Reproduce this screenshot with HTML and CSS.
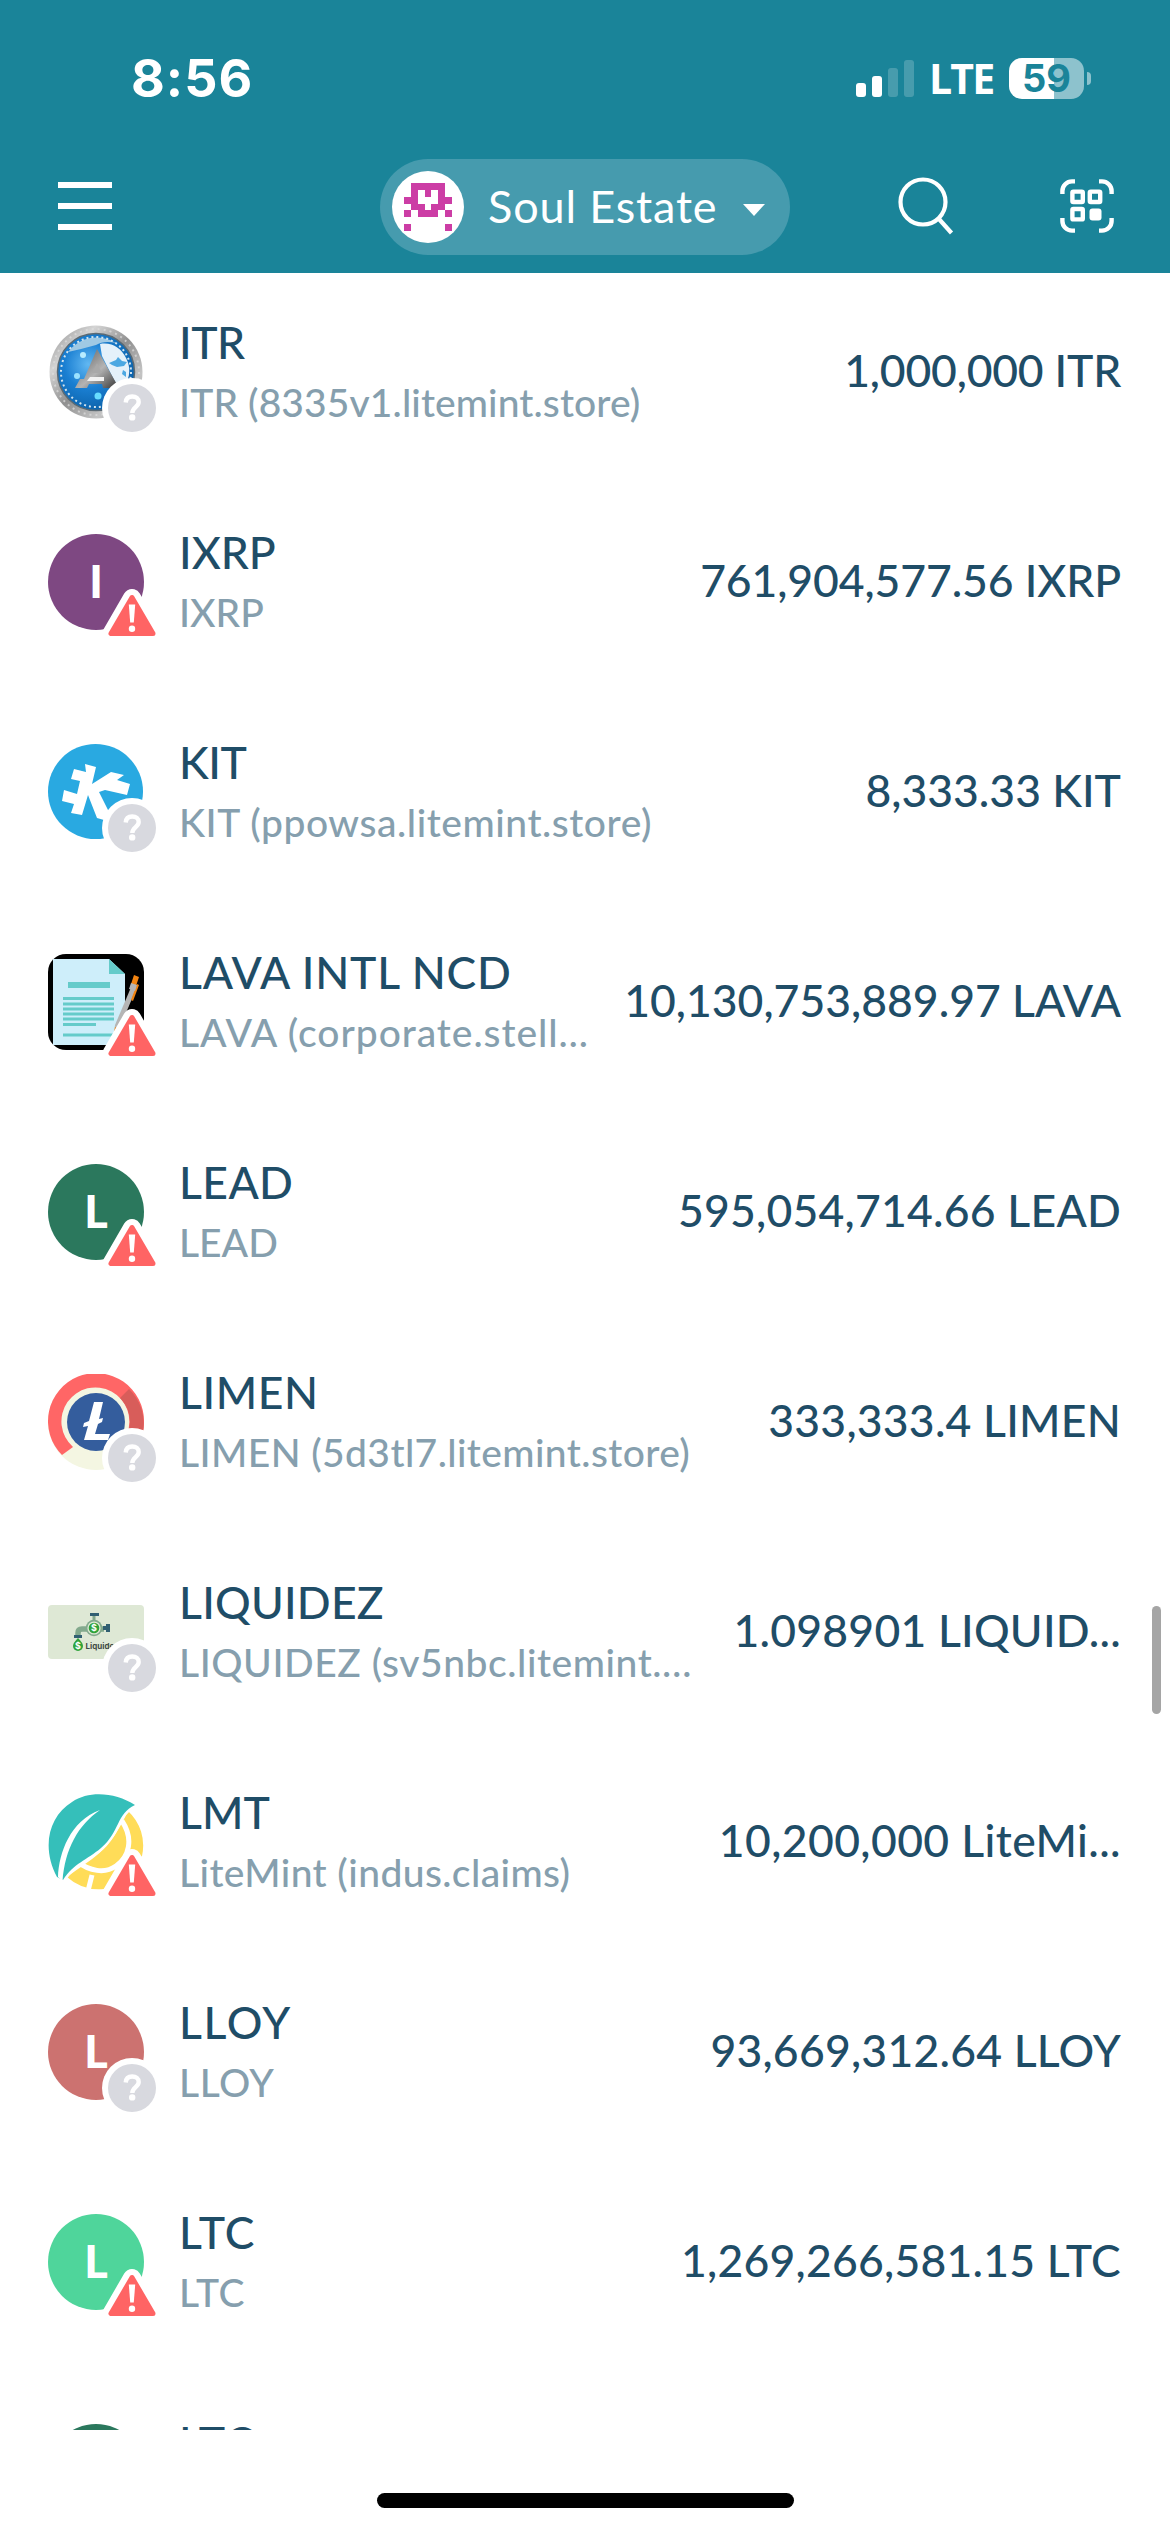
FILE: index.html
```html
<!DOCTYPE html>
<html lang="en">
<head>
<meta charset="utf-8">
<title>Assets</title>
<link rel="stylesheet" href="styles.css">
</head>
<body>
<svg class="defs" width="0" height="0" aria-hidden="true">
  <symbol id="unknown" viewBox="0 0 60 60">
    <circle cx="30" cy="30" r="30" fill="#fff"/>
    <circle cx="30" cy="30" r="24" fill="#d8d9df"/>
    <path d="M23.700 24.500c.3-4 3-6 6.500-6 3.900 0 6.500 2.200 6.500 5.500 0 5-6.400 5.400-6.400 11" fill="none" stroke="#fff" stroke-width="4.400"/>
    <circle cx="30.200" cy="39.400" r="3.200" fill="#fff"/>
  </symbol>
  <symbol id="warning" viewBox="0 0 60 60">
    <path d="M30 10 9.500 45.500h41z" fill="#fff" stroke="#fff" stroke-width="18" stroke-linejoin="round"/>
    <path d="M30 9.500 9 45.500h42z" fill="#ff6464" stroke="#ff6464" stroke-width="5" stroke-linejoin="round"/>
    <path d="M26.800 16.500h6.400l-1.400 18h-3.600z" fill="#fff"/>
    <circle cx="30" cy="40.800" r="3.200" fill="#fff"/>
  </symbol>
</svg>
<div class="screen">
  <header class="header">
    <div class="status">
      <span class="time">8:56</span>
      <div class="status-right">
        <svg class="signal" width="58" height="37" viewBox="0 0 58 37" fill="#fff">
          <rect y="23" width="10" height="14" rx="3"/><rect x="16" y="16" width="10" height="21" rx="3"/>
          <rect x="32" y="8" width="10" height="29" rx="3" opacity=".2"/><rect x="48" width="10" height="37" rx="3" opacity=".2"/>
        </svg>
        <span class="network">LTE</span>
        <div class="battery"><span class="level">59</span></div>
        <span class="nub"></span>
      </div>
    </div>
    <nav class="nav">
      <svg class="menu" width="54" height="48" viewBox="0 0 54 48" fill="#fff"><path d="M0 0h54v6H0zM0 21h54v6H0zM0 42h54v6H0z"/></svg>
      <div class="account">
        <svg class="identicon" width="72" height="72" viewBox="0 0 72 72">
          <circle cx="36" cy="36" r="36" fill="#fff"/>
          <path fill="#cc3da5" d="M19 12h34v14h7v7h-7v6h-7v7H26v-7h-7v-6h-7v-7h7zM12 39h7v7h-7zM53 39h7v7h-7zM12 53h7v7h-7zM53 53h7v7h-7z"/>
          <path fill="#fff" d="M26 19h7v7h6v-7h7v14h-7v6h-6v-6h-7z"/>
        </svg>
        <span class="account-name">Soul Estate</span>
        <svg class="caret" width="22" height="12" viewBox="0 0 22 12"><path d="M0 0h22L11 12z" fill="#fff"/></svg>
      </div>
      <svg class="search" width="56" height="62" viewBox="0 0 56 62" fill="none" stroke="#fff" stroke-width="4.200"><circle cx="25" cy="26" r="22.500"/><path d="m40.500 42.500 13 14.500"/></svg>
      <svg class="scan" width="54" height="54" viewBox="0 0 54 54" fill="none" stroke="#fff" stroke-width="4.400">
        <path d="M2.400 15v-3a9.600 9.600 0 0 1 9.600-9.600h3M39 2.400h3a9.600 9.600 0 0 1 9.600 9.600v3M51.600 39v3a9.600 9.600 0 0 1-9.600 9.600h-3M15 51.600h-3A9.600 9.600 0 0 1 2.400 42v-3"/>
        <rect x="12.400" y="12.600" width="10.400" height="10.400" rx="1"/><rect x="29.800" y="12.600" width="10.400" height="10.400" rx="1"/><rect x="12.400" y="30" width="10.400" height="10.400" rx="1"/>
        <rect x="29.500" y="29.500" width="12" height="12" rx="3" fill="#fff" stroke="none"/>
      </svg>
    </nav>
  </header>

  <main class="list">
    <div class="row">
      <div class="avatar">
        <svg viewBox="0 0 96 96">
          <defs>
            <linearGradient id="rim" x1="0" y1="0" x2="1" y2="1"><stop offset="0" stop-color="#8a8a8a"/><stop offset=".25" stop-color="#d4d4d4"/><stop offset=".5" stop-color="#909090"/><stop offset=".75" stop-color="#c4c4c4"/><stop offset="1" stop-color="#999"/></linearGradient>
            <radialGradient id="globe" cx=".4" cy=".4" r=".62"><stop offset="0" stop-color="#62b8f2"/><stop offset=".5" stop-color="#1a7fd2"/><stop offset="1" stop-color="#0c62aa"/></radialGradient>
            <linearGradient id="steel" x1="0" y1="0" x2="1" y2="1"><stop offset="0" stop-color="#555"/><stop offset=".55" stop-color="#b4b4b4"/><stop offset="1" stop-color="#333"/></linearGradient>
          </defs>
          <circle cx="48" cy="48" r="46.500" fill="url(#rim)"/>
          <circle cx="48" cy="48" r="43" fill="none" stroke="#dedede" stroke-width="2" stroke-dasharray="2 4" opacity=".7"/>
          <circle cx="48" cy="48" r="38.500" fill="url(#globe)" stroke="#5b6a74" stroke-width="1.500"/>
          <path d="M20 28A36 36 0 0 1 68 19q-12-3-20 2-14 4-28 7z" fill="#9fc9e4"/>
          <circle cx="48" cy="48" r="35" fill="none" stroke="#d3e4ee" stroke-width="2" stroke-dasharray="2 3"/>
          <path d="M52 20c12-2 21 4 26 14 5 9 4 20-1 26l-8 2-15-30z" fill="#e4f1fa"/>
          <path d="m61 39 7-3 2-3 4 4 5 1-3 4-7 1-5-2zM75 46l3 2v5l-4-3z" fill="#4ba8e2"/>
          <path d="M49 25 71 64H55l-1-4H41l-2 4H27l5-9h4z" fill="url(#steel)"/>
          <path d="M42 53h14v4H39z" fill="#f2f2f2"/><path d="m49 39-5 10h10z" fill="#a9a9a9"/>
          <circle cx="35" cy="31" r="3" fill="#b8ecff"/><circle cx="29" cy="52" r="3" fill="#9be2ff"/><circle cx="50" cy="72" r="3.500" fill="#67dcff"/>
        </svg>
        <svg class="badge"><use href="#unknown"/></svg>
      </div>
      <div class="info"><div class="name snug">ITR</div><div class="issuer wide-1">ITR (8335v1.litemint.store)</div></div>
      <div class="amount tight-2">1,000,000 ITR</div>
    </div>

    <div class="row">
      <div class="avatar"><span class="letter purple">I</span><svg class="badge"><use href="#warning"/></svg></div>
      <div class="info"><div class="name">IXRP</div><div class="issuer">IXRP</div></div>
      <div class="amount tight-1">761,904,577.56 IXRP</div>
    </div>

    <div class="row">
      <div class="avatar">
        <svg viewBox="0 0 96 96"><circle cx="47.500" cy="47.500" r="47.500" fill="#29a9e1"/>
          <path fill="#fff" d="m37 20 11 3-4 17 19-12 13 3-7 5 13 4-3 11-22-5-6 2 12 24-7 4-7-2-9-23-6 20-11-2 3-9-12-3 2-11 13 4 3-13-9-2 3-10 12 3z"/></svg>
        <svg class="badge"><use href="#unknown"/></svg>
      </div>
      <div class="info"><div class="name snug">KIT</div><div class="issuer wide-5">KIT (ppowsa.litemint.store)</div></div>
      <div class="amount">8,333.33 KIT</div>
    </div>

    <div class="row">
      <div class="avatar">
        <svg viewBox="0 0 96 96"><rect width="96" height="96" rx="18" fill="#000"/>
          <path d="M5 5h56l16 15v71H5z" fill="#ceeefa"/><path d="M61 5v15h16z" fill="#65cbca"/>
          <path fill="#65cbca" d="M20 28h42v6H20zM15 43h51v3H15zM15 48.500h51v3H15zM15 53.500h51v3H15zM15 58.500h51v3H15zM15 63.500h51v3H15zM15 69h33v3H15zM15 79.500h51v3H15z"/>
          <path d="m84 31 5 2-17 40-6 7 1-9z" fill="#b5b5b5"/><path d="m86 21 5 2-3 9-5-2zM89 30l2 1-6 16-2-1z" fill="#f28411"/><path d="m83 29 6 2-2 6-6-2z" fill="#b5b5b5"/><path d="m67 73 3 2-4 4z" fill="#f28411"/></svg>
        <svg class="badge"><use href="#warning"/></svg>
      </div>
      <div class="info"><div class="name wide-8">LAVA INTL NCD</div><div class="issuer wide-9">LAVA (corporate.stell…</div></div>
      <div class="amount">10,130,753,889.97 LAVA</div>
    </div>

    <div class="row">
      <div class="avatar"><span class="letter forest">L</span><svg class="badge"><use href="#warning"/></svg></div>
      <div class="info"><div class="name wide-4">LEAD</div><div class="issuer">LEAD</div></div>
      <div class="amount wide-2">595,054,714.66 LEAD</div>
    </div>

    <div class="row">
      <div class="avatar">
        <svg viewBox="0 0 96 96"><circle cx="48" cy="48" r="48" fill="#f4f6e2"/>
          <path d="M14 81A48 48 0 1 1 96 48a48 48 0 0 1-1 10L79 60A34 34 0 1 0 25 73z" fill="#ff6666"/>
          <path d="M81 15a48 48 0 0 1 14 43l-14-2a34 34 0 0 0-9-32z" fill="#d85d5a"/>
          <circle cx="48" cy="48" r="29" fill="#345d9d"/>
          <path fill="#fff" d="M46 28h9l-4 17 4-1-1 4-4 2-3 10h15l-2 6H36l4-14-5 1 1-4 5-2z"/></svg>
        <svg class="badge"><use href="#unknown"/></svg>
      </div>
      <div class="info"><div class="name wide-5">LIMEN</div><div class="issuer wide-4">LIMEN (5d3tl7.litemint.store)</div></div>
      <div class="amount wide-2">333,333.4 LIMEN</div>
    </div>

    <div class="row">
      <div class="avatar">
        <svg viewBox="0 0 96 96"><rect y="21" width="96" height="54" rx="4" fill="#dee8d5"/>
          <path d="M30 52v-3q0-4 4-4h22" fill="none" stroke="#83a98d" stroke-width="5.500"/><path d="M46 31v9" stroke="#83a98d" stroke-width="3"/>
          <circle cx="46" cy="44" r="8.300" fill="#83a98d"/><circle cx="46" cy="44" r="6.600" fill="#dee8d5"/><circle cx="46" cy="44" r="5.300" fill="#2fa33b"/>
          <path d="M42 29h9v3h-9zM26 51h8v3h-8zM58 40h4v8h-4zM55 42h3v4h-3z" fill="#315f72"/>
          <path d="M30 54q5 5 5 8a5 5 0 0 1-10 0q0-3 5-8z" fill="#2fa33b"/>
          <text x="46" y="47.300" class="logo-coin">$</text><text x="30" y="65" class="logo-coin">$</text>
          <text x="37.500" y="65" class="logo-word">Liquidez</text></svg>
        <svg class="badge"><use href="#unknown"/></svg>
      </div>
      <div class="info"><div class="name wide-2">LIQUIDEZ</div><div class="issuer wide-5">LIQUIDEZ (sv5nbc.litemint.…</div></div>
      <div class="amount wide-2">1.098901 LIQUID...</div>
    </div>

    <div class="row">
      <div class="avatar">
        <svg viewBox="0 0 96 96"><path d="M80 17a47 47 0 0 1 14 45L56 95A48 48 0 0 1 19 83C45 63 60 60 80 17z" fill="#ffdc58"/>
          <path d="M74 27c12 18 7 36-6 45-11 8-27 5-38-4M44 81l-4 16" fill="none" stroke="#fff" stroke-width="5"/>
          <path d="M9 83C-7 53 1 22 24 8 42-4 68-1 87 11 68 20 72 38 53 54 39 66 26 69 15 86z" fill="#35bfba" stroke="#fff" stroke-width="5" paint-order="stroke"/>
          <path d="M10 83C11 59 22 27 52 16 30 31 17 55 14.500 87z" fill="#fff"/></svg>
        <svg class="badge"><use href="#warning"/></svg>
      </div>
      <div class="info"><div class="name">LMT</div><div class="issuer wide-4">LiteMint (indus.claims)</div></div>
      <div class="amount wide-4">10,200,000 LiteMi...</div>
    </div>

    <div class="row">
      <div class="avatar"><span class="letter rose">L</span><svg class="badge"><use href="#unknown"/></svg></div>
      <div class="info"><div class="name wide-16">LLOY</div><div class="issuer wide-5">LLOY</div></div>
      <div class="amount wide-2">93,669,312.64 LLOY</div>
    </div>

    <div class="row">
      <div class="avatar"><span class="letter mint">L</span><svg class="badge"><use href="#warning"/></svg></div>
      <div class="info"><div class="name wide-9">LTC</div><div class="issuer wide-5">LTC</div></div>
      <div class="amount wide-2">1,269,266,581.15 LTC</div>
    </div>

    <div class="row">
      <div class="avatar"><span class="letter forest"></span></div>
      <div class="info"><div class="name wide-9">LTC</div></div>
    </div>
    <div class="scrollbar"></div>
  </main>
  <footer class="home"><span class="home-bar"></span></footer>
</div>
</body>
</html>
```
FILE: styles.css
```css
* { box-sizing: border-box; }
body { margin: 0; background: #fff; font-family: Lato, "Open Sans", sans-serif; }
svg { display: block; flex: none; }
.defs { position: absolute; }
.screen { width: 1170px; height: 2532px; display: flex; flex-direction: column; overflow: hidden; }

.header { flex: none; height: 273px; background: #1a8499; color: #fff; display: flex; flex-direction: column; }
.status { height: 159px; padding: 48px 79px 0 131px; display: flex; justify-content: space-between; font-family: Inter, sans-serif; }
.time { font-size: 52px; font-weight: 700; line-height: 61px; letter-spacing: 1px; }
.status-right { height: 60px; display: flex; align-items: center; }
.network { margin-left: 15px; width: 63px; font: 700 41px/60px "Open Sans", sans-serif; letter-spacing: -1.800px; }
.battery { margin-left: 17px; width: 75px; height: 41px; border-radius: 13px; background: linear-gradient(90deg, #fff 45px, #8dc2cd 45px); color: #1a8499; text-align: center; }
.level { font-size: 38px; font-weight: 700; line-height: 41px; }
.nub { margin-left: 3px; width: 4px; height: 13px; border-radius: 0 4px 4px 0; background: #8dc2cd; }

.nav { height: 96px; padding-left: 58px; display: flex; align-items: center; }
.menu { margin-top: -2px; }
.account { margin-left: 268px; width: 410px; height: 96px; padding-left: 12px; border-radius: 48px; background: #469bae; display: flex; align-items: center; }
.account-name { margin-left: 24px; margin-top: -3px; width: 231px; font-size: 45px; line-height: 60px; letter-spacing: .850px; white-space: nowrap; }
.caret { margin-left: 24px; margin-top: 6px; }
.search { margin-left: 108px; }
.scan { margin-left: 106px; margin-top: -2px; }

.list { position: relative; flex: none; height: 2157px; padding: 51px 49px 0 48px; overflow: hidden; }
.row { height: 210px; display: flex; align-items: flex-start; }
.avatar { position: relative; flex: none; width: 96px; height: 96px; }
.avatar > svg:first-child { width: 96px; height: 96px; }
.avatar .badge { position: absolute; left: 54px; top: 54px; width: 60px; height: 60px; }
.letter { display: block; width: 96px; height: 96px; border-radius: 50%; color: #fff; font-size: 45px; font-weight: 900; line-height: 94px; text-align: center; }
.purple { background: #7e4882; }
.forest { background: #2b785d; }
.rose { background: #cc7270; }
.mint { background: #4fd59b; }
.info { flex: 1; padding-left: 35px; white-space: nowrap; }
.name { height: 60px; margin-top: -12px; font-size: 44.500px; font-weight: 500; line-height: 60px; color: #1f4d67; }
.issuer { font-size: 39px; font-weight: 500; line-height: 60px; color: #869fae; }
.amount { flex: none; padding-top: 16px; font-size: 44.500px; font-weight: 500; line-height: 60px; color: #1f4d67; white-space: nowrap; }

/* optical tracking */
.snug { letter-spacing: -.500px; }
.tight-2 { letter-spacing: -.200px; }
.tight-1 { letter-spacing: -.100px; }
.wide-1 { letter-spacing: .100px; }
.wide-2 { letter-spacing: .220px; }
.wide-4 { letter-spacing: .400px; }
.wide-5 { letter-spacing: .550px; }
.wide-8 { letter-spacing: .800px; }
.wide-9 { letter-spacing: .950px; }
.wide-16 { letter-spacing: 1.600px; }

.logo-coin { font: 700 9px Inter, sans-serif; fill: #fff; text-anchor: middle; }
.logo-word { font: 700 8px Inter, sans-serif; fill: #3f4b45; }
.scrollbar { position: absolute; left: 1152px; top: 1333px; width: 9px; height: 108px; border-radius: 5px; background: #a5a5a5; }

.home { flex: 1; display: flex; justify-content: center; padding-top: 63px; }
.home-bar { width: 417px; height: 15px; border-radius: 8px; background: #000; }
```
